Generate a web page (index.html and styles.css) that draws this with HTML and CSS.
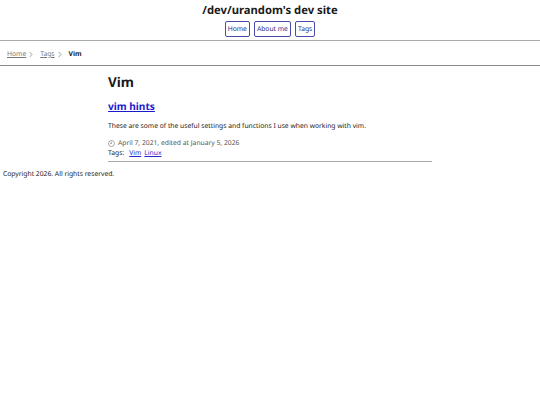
FILE: index.html
```html
<!DOCTYPE html>
<html lang="en">
<head>
    <meta charset="UTF-8">
    <meta name="viewport" content="width=device-width, initial-scale=1.0">
    <title>Vim - /dev/urandom's dev site</title>
    <link rel="stylesheet" href="styles.css">
</head>
<body>

    <!-- Header -->
    <header class="site-header">
        <h1 class="site-title">/dev/urandom's dev site</h1>
        <nav class="site-nav">
            <a class="nav-button" href="#">Home</a>
            <a class="nav-button" href="#">About me</a>
            <a class="nav-button" href="#">Tags</a>
        </nav>
    </header>

    <!-- Breadcrumbs -->
    <nav class="breadcrumbs">
        <a href="#">Home</a>
        <svg class="crumb-arrow" viewBox="0 0 6 10" width="4" height="7"><path d="M1 1l3.5 4L1 9"/></svg>
        <a href="#">Tags</a>
        <svg class="crumb-arrow" viewBox="0 0 6 10" width="4" height="7"><path d="M1 1l3.5 4L1 9"/></svg>
        <span class="crumb-current">Vim</span>
    </nav>

    <!-- Content -->
    <main class="content">
        <h1 class="page-title">Vim</h1>
        <article class="post">
            <h2 class="post-title"><a href="#">vim hints</a></h2>
            <p class="post-summary">These are some of the useful settings and functions I use when working with vim.</p>
            <div class="post-date">
                <svg class="clock" viewBox="0 0 14 14" width="7" height="7"><circle cx="7" cy="7" r="6"/><path d="M7 3.5V7H4"/></svg>
                <span>April 7, 2021, edited at January 5, 2026</span>
            </div>
            <div class="post-tags">
                <span>Tags:</span>
                <a href="#">Vim</a>
                <a href="#">Linux</a>
            </div>
        </article>
    </main>

    <footer class="site-footer">Copyright 2026. All rights reserved.</footer>

</body>
</html>
```

FILE: styles.css
```css
body {
    font-family: "Noto Sans", sans-serif;
    font-size: 6.75px;
    line-height: 10px;
    background-color: white;
    color: #1a1a1a;
    margin: 0;
    text-rendering: geometricPrecision;
}

/* Header */
.site-header {
    padding-top: 3px;
    padding-bottom: 3px;
    border-bottom: 1px solid #aaa;
    text-align: center;
}

.site-title {
    margin: 0 0 3px 0;
    font-size: 11.25px;
    line-height: 15px;
    font-weight: 700;
}

.site-nav {
    display: flex;
    justify-content: center;
    gap: 4px;
}

.nav-button {
    padding: 2px 2px;
    border: 1px solid #4a4aa8;
    border-radius: 2px;
    color: #2a2a8f;
    text-decoration: none;
}

/* Breadcrumbs */
.breadcrumbs {
    display: flex;
    align-items: center;
    height: 25px;
    padding-top: 2px;
    box-sizing: border-box;
    padding-left: 7px;
    border-bottom: 1px solid #888;
}

.breadcrumbs a {
    color: #777;
}

.crumb-arrow {
    margin-left: 3px;
    margin-right: 7px;
    fill: none;
    stroke: #555;
    stroke-width: 0.8;
}

.crumb-current {
    font-weight: 700;
}

/* Content */
.content {
    width: 324px;
    margin-left: 108px;
    padding-bottom: 3px;
    border-bottom: 1px solid #aaa;
}

.page-title {
    margin: 9px 0 0 0;
    font-size: 13.5px;
    line-height: 15px;
    font-weight: 700;
}

.post-title {
    margin: 9px 0 0 0;
    font-size: 10.125px;
    line-height: 14px;
    font-weight: 700;
}

.post-title a {
    color: #1a1acc;
}

.post-summary {
    margin: 8px 0 0 0;
}

.post-date {
    display: flex;
    align-items: center;
    gap: 3px;
    margin-top: 7px;
    color: #555;
}

.clock {
    fill: none;
    stroke: #555;
    stroke-width: 1;
}

.post-tags {
    display: flex;
    gap: 3px;
}

.post-tags span {
    margin-right: 2px;
}

.post-tags a {
    color: #2a2acc;
}

/* Footer */
.site-footer {
    padding-left: 3px;
    margin-top: 7px;
}
```
